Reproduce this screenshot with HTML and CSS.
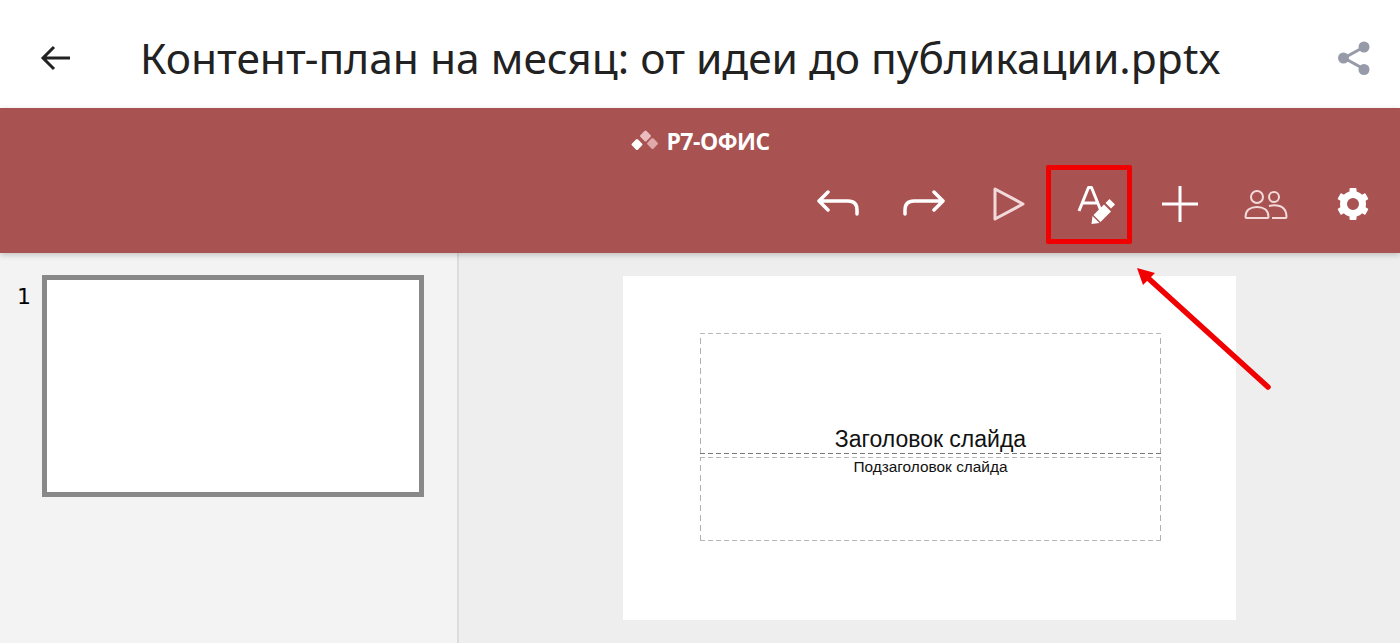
FILE: index.html
```html
<!DOCTYPE html>
<html lang="ru">

<head>
    <meta charset="utf-8">
    <meta name="viewport" content="width=device-width, initial-scale=1.0">
    <title>Контент-план на месяц</title>
    <link rel="stylesheet" href="styles.css">
</head>

<body>
    <!--Верхняя строка с именем файла-->
    <header class="topbar">
        <svg class="back" width="32" height="28" viewBox="0 0 32 28">
            <path d="M30 14H3M14 3L3 14l11 11" />
        </svg>
        <h1 class="filename">Контент-план на месяц: от идеи до публикации.pptx</h1>
        <svg class="share" width="34" height="36" viewBox="0 0 34 36">
            <path d="M27 7L7 18l20 11" />
            <circle cx="27" cy="7" r="5.5" />
            <circle cx="6.5" cy="18" r="5.5" />
            <circle cx="27" cy="29.5" r="5.5" />
        </svg>
    </header>

    <!--Панель редактора-->
    <section class="editorbar">
        <div class="brand">
            <svg width="28" height="22" viewBox="0 0 28 22">
                <rect x="10.25" y="1.75" width="8.5" height="8.5" rx="1.5" transform="rotate(45 14.5 6)" fill="#e9bdbd" />
                <rect x="1.75" y="10.25" width="8.5" height="8.5" rx="1.5" transform="rotate(45 6 14.5)" fill="#fff" />
                <rect x="17.25" y="9.25" width="8.5" height="8.5" rx="1.5" transform="rotate(45 21.5 13.5)" fill="#dfa9a9" />
            </svg>
            <span>Р7-ОФИС</span>
        </div>
        <div class="tools">
            <button class="tool">
                <svg width="44" height="28" viewBox="0 0 44 28" class="line bold">
                    <path d="M3 11h29c6 0 9 3 9 9v4M12 2l-9 9 9 9" />
                </svg>
            </button>
            <button class="tool">
                <svg width="44" height="28" viewBox="0 0 44 28" class="line bold">
                    <path d="M41 11H12c-6 0-9 3-9 9v4M32 2l9 9-9 9" />
                </svg>
            </button>
            <button class="tool">
                <svg width="34" height="36" viewBox="0 0 34 36" class="line dim">
                    <path d="M3 3l28 15L3 33z" />
                </svg>
            </button>
            <button class="tool tool-active">
                <svg width="40" height="40" viewBox="0 0 40 40" class="line">
                    <path d="M4 27L13.5 3.5h3L26 27M7.5 19h15" />
                    <path class="fill" d="M16.5 40l1-8 7 7z" />
                    <path class="fill" d="M18.5 31l10.5-10.500 7 7L25.500 38z" />
                    <path class="fill" d="M30.500 19l4-4 5.500 5.500-4 4z" />
                </svg>
            </button>
            <button class="tool">
                <svg width="38" height="38" viewBox="0 0 38 38" class="line">
                    <path d="M19 1v36M1 19h36" />
                </svg>
            </button>
            <button class="tool">
                <svg width="44" height="30" viewBox="0 0 44 30" class="line thin dim">
                    <circle cx="13" cy="8" r="6" />
                    <circle cx="30" cy="8" r="5" />
                    <path d="M1.5 28c0-7 5-10 11.5-10s11.5 3 11.5 10c0 .5-.5 1-1 1H2.5c-.5 0-1-.5-1-1z" />
                    <path d="M25 17c1.5-.5 3-.7 5-.7 7 0 12.5 3 12.5 11.700 0 .5-.5 1-1 1H28" />
                </svg>
            </button>
            <button class="tool tool-gear">
                <svg width="34" height="34" viewBox="0 0 34 34">
                    <circle cx="17" cy="17" r="9.5" fill="none" stroke="#fff" stroke-width="7" />
                    <g fill="#fff">
                        <rect x="13.5" y="1" width="7" height="6" rx="1" />
                        <rect x="13.5" y="27" width="7" height="6" rx="1" />
                        <rect x="13.5" y="1" width="7" height="6" rx="1" transform="rotate(60 17 17)" />
                        <rect x="13.5" y="1" width="7" height="6" rx="1" transform="rotate(120 17 17)" />
                        <rect x="13.5" y="1" width="7" height="6" rx="1" transform="rotate(240 17 17)" />
                        <rect x="13.5" y="1" width="7" height="6" rx="1" transform="rotate(300 17 17)" />
                    </g>
                </svg>
            </button>
        </div>
    </section>

    <!--Рабочая область-->
    <main class="workspace">
        <aside class="thumbs">
            <span class="thumb-num">1</span>
            <div class="thumb"></div>
        </aside>
        <div class="stage">
            <div class="slide">
                <div class="box box-title">Заголовок слайда</div>
                <div class="box box-sub">Подзаголовок слайда</div>
            </div>
        </div>
    </main>

    <!--Стрелка-указатель поверх скриншота-->
    <svg class="pointer" width="150" height="130" viewBox="0 0 150 130">
        <path class="pointer-line" d="M132 121L12 12" />
        <path class="pointer-head" d="M1 2l18 5L7 19z" />
    </svg>
</body>

</html>
```

FILE: styles.css
```css
html,
body {
    height: 100%;
}

body {
    margin: 0;
    display: flex;
    flex-direction: column;
    overflow: hidden;
    background-color: #fff;
    font-family: "Noto Sans", sans-serif;
}

/* TOPBAR */

.topbar {
    height: 108px;
    flex: none;
    display: flex;
    align-items: center;
    padding: 7px 29px 0 40px;
    box-sizing: border-box;
}

.back {
    flex: none;
    fill: none;
    stroke: #222;
    stroke-width: 3;
}

.filename {
    flex: 1;
    margin: 0 0 0 68px;
    font-size: 42.5px;
    font-weight: 400;
    color: #222;
    white-space: nowrap;
}

.share {
    flex: none;
    fill: #979aa8;
    stroke: #979aa8;
}

.share path {
    fill: none;
    stroke-width: 3;
}

.share circle {
    stroke: none;
}

/* EDITORBAR */

.editorbar {
    height: 145px;
    flex: none;
    background-color: #a85252;
    box-shadow: 0 2px 6px rgba(0, 0, 0, .2);
    position: relative;
    z-index: 1;
}

.brand {
    height: 66px;
    display: flex;
    justify-content: center;
    align-items: center;
    gap: 7px;
    padding-left: 1px;
    color: #fff;
    font-family: "Open Sans", sans-serif;
    font-size: 23px;
    font-weight: 700;
    letter-spacing: -.5px;
}

.tools {
    display: flex;
    justify-content: flex-end;
    padding-right: 6px;
}

.tool {
    width: 85.5px;
    height: 59px;
    padding: 0;
    border: none;
    background: none;
    display: flex;
    justify-content: center;
    align-items: center;
    position: relative;
}

.tool-active::after {
    content: "";
    position: absolute;
    left: -6px;
    top: -9px;
    width: 76px;
    height: 69px;
    border: 5px solid #f00000;
    border-radius: 2px;
}

.tool-gear svg {
    margin-left: 3px;
}

.line {
    fill: none;
    stroke: #fff;
    stroke-width: 3;
    stroke-linejoin: round;
}

.line .fill {
    fill: #fff;
    stroke: none;
}

.bold {
    stroke-width: 3.5;
    stroke-linecap: round;
}

.thin {
    stroke-width: 2;
}

.dim {
    stroke: #f3dada;
}

/* WORKSPACE */

.workspace {
    flex: 1;
    display: flex;
    min-height: 0;
}

.thumbs {
    width: 459px;
    flex: none;
    display: flex;
    align-items: flex-start;
    padding: 22px 0 0 17px;
    box-sizing: border-box;
    background-color: #f3f3f3;
    border-right: 2px solid #dcdcdc;
}

.thumb-num {
    width: 25px;
    margin-top: 8px;
    font-family: "DejaVu Sans", sans-serif;
    font-size: 22px;
    line-height: 28px;
    color: #000;
}

.thumb {
    width: 372px;
    height: 212px;
    background-color: #fff;
    border: 5px solid #888;
}

.stage {
    flex: 1;
    background-color: #eee;
    padding: 23px 0 0 164px;
}

.slide {
    width: 613px;
    height: 344px;
    padding: 57px 0 0 77px;
    box-sizing: border-box;
    background-color: #fff;
}

/* stiplet kant med lange streger, dashed giver for korte */
.box {
    width: 461px;
    box-sizing: border-box;
    text-align: center;
    color: #111;
    font-family: "Liberation Sans", sans-serif;
    background-image:
        repeating-linear-gradient(90deg, #b8b8b8 0 5px, transparent 5px 8px),
        repeating-linear-gradient(90deg, #b8b8b8 0 5px, transparent 5px 8px),
        repeating-linear-gradient(0deg, #b0b0b0 0 6px, transparent 6px 10px),
        repeating-linear-gradient(0deg, #b0b0b0 0 6px, transparent 6px 10px);
    background-size: 100% 1px, 100% 1px, 1px 100%, 1px 100%;
    background-position: top, bottom, left, right;
    background-repeat: no-repeat;
}

.box-title {
    height: 121px;
    padding-top: 93px;
    font-size: 23px;
    line-height: 27px;
    background-image:
        repeating-linear-gradient(90deg, #b8b8b8 0 5px, transparent 5px 8px),
        repeating-linear-gradient(90deg, #777 0 5px, transparent 5px 8px),
        repeating-linear-gradient(0deg, #b0b0b0 0 6px, transparent 6px 10px),
        repeating-linear-gradient(0deg, #b0b0b0 0 6px, transparent 6px 10px);
}

.box-sub {
    height: 84px;
    margin-top: 3px;
    font-size: 15.4px;
    line-height: 20px;
}

/* ARROW */

.pointer {
    position: absolute;
    left: 1136px;
    top: 266px;
}

.pointer-line {
    fill: none;
    stroke: #f00000;
    stroke-width: 5.5;
    stroke-linecap: round;
}

.pointer-head {
    fill: #f00000;
}
```
